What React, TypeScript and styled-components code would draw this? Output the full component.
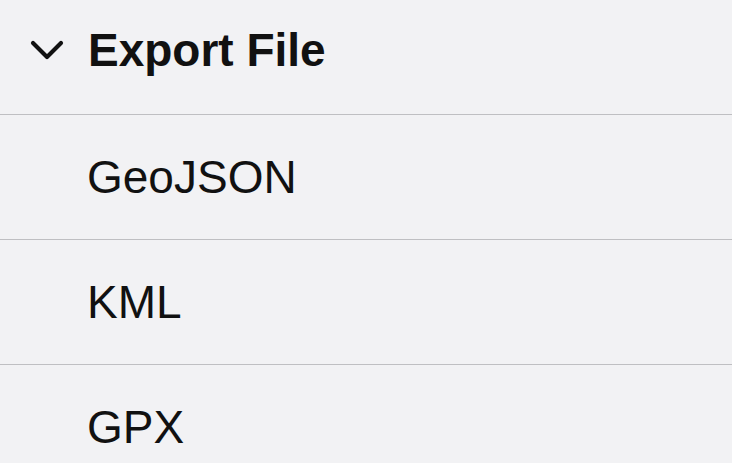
import React from "react";
import styled, { createGlobalStyle } from "styled-components";

const GlobalStyle = createGlobalStyle`
  html, body {
    margin: 0;
    padding: 0;
    background: #f2f2f4;
    overflow: hidden;
  }
  body {
    font-family: "Liberation Sans", Arial, sans-serif;
    color: #111111;
  }
`;

const Panel = styled.div`
  width: 732px;
  height: 463px;
  background: #f2f2f4;
  overflow: hidden;
`;

const Header = styled.div`
  display: flex;
  align-items: center;
  gap: 24px;
  height: 115px;
  box-sizing: border-box;
  padding: 0 0 14px 30px;
  border-bottom: 1px solid #bfbfc2;
`;

const Chevron = styled.svg`
  width: 34px;
  height: 20px;
  flex-shrink: 0;
`;

const Title = styled.h2`
  margin: 0;
  font-size: 46px;
  font-weight: 700;
  line-height: 1;
  letter-spacing: 0;
`;

const List = styled.ul`
  list-style: none;
  margin: 0;
  padding: 0;
`;

const Row = styled.li`
  display: flex;
  align-items: center;
  height: 125px;
  box-sizing: border-box;
  padding-left: 87px;
  border-bottom: 1px solid #bfbfc2;
  font-size: 46px;
  line-height: 1;
`;

const formats = ["GeoJSON", "KML", "GPX"];

const App = () => {
  return (
    <Panel>
      <GlobalStyle />
      <Header>
        <Chevron viewBox="0 0 34 20" fill="none">
          <path
            d="M3 3 L17 17 L31 3"
            stroke="#111111"
            strokeWidth="4.2"
            strokeLinecap="round"
            strokeLinejoin="round"
          />
        </Chevron>
        <Title>Export File</Title>
      </Header>
      <List>
        {formats.map((f) => (
          <Row key={f}>{f}</Row>
        ))}
      </List>
    </Panel>
  );
};

export default App;
